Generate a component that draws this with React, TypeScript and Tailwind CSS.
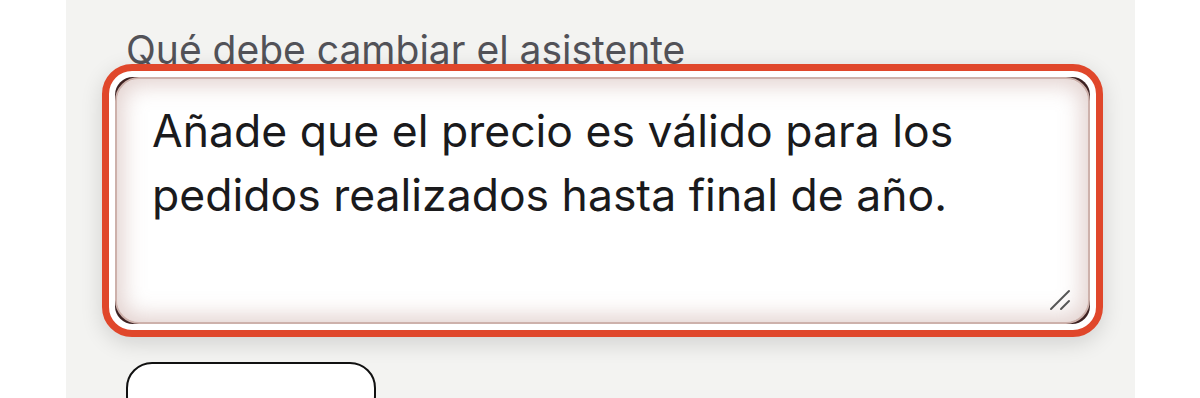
// Edit-request panel: label, focused textarea with ring, action button below

const FONT = { fontFamily: "Inter, 'Noto Sans', sans-serif" };

const TEXT = "Añade que el precio es válido para los\npedidos realizados hasta final de año.";

// ===== RESIZE GRIP =====
function ResizeGrip() {
  return (
    <svg
      className="absolute right-[18px] bottom-[12px]"
      width="24"
      height="24"
      viewBox="0 0 24 24"
    >
      <line x1="3" y1="21" x2="21" y2="3" stroke="#555" strokeWidth="2" strokeLinecap="round" />
      <line x1="13" y1="21" x2="21" y2="13" stroke="#555" strokeWidth="2" strokeLinecap="round" />
    </svg>
  );
}

export default function App() {
  return (
    <div className="w-[1200px] h-[398px] overflow-hidden bg-white" style={FONT}>
      {/* ===== CARD ===== */}
      <div className="ml-[66px] w-[1069px] h-[398px] bg-[#f3f3f1] px-[36px] pt-[36px] flex flex-col">
        <label className="shrink-0 pl-[24px] text-[39px] leading-[28px] text-[#525258] whitespace-nowrap">
          Qué debe cambiar el asistente
        </label>

        {/* ===== FOCUSED TEXTAREA ===== */}
        <div className="shrink-0 w-[1001px] h-[273px] rounded-[30px] border-[7px] border-[#e0472b] bg-white p-[6px] shadow-[0_6px_22px_rgba(0,0,0,0.14)]">
          <div className="relative h-full rounded-[18px] bg-[#3d2222]">
            <textarea
              readOnly
              value={TEXT}
              className="block w-full h-full resize-none rounded-[24px] border-2 border-[#cdb1ab] bg-white pl-[35px] pr-[20px] pt-[20px] text-[44.5px] leading-[64px] text-[#1a1a1c] outline-none shadow-[inset_0_0_22px_6px_rgba(170,120,110,0.34)]"
              style={FONT}
            />
            <ResizeGrip />
          </div>
        </div>

        {/* ===== BUTTON ===== */}
        <button className="mt-[25px] ml-[24px] w-[250px] h-[60px] shrink-0 rounded-[26px] border-2 border-[#111] bg-white" />
      </div>
    </div>
  );
}
